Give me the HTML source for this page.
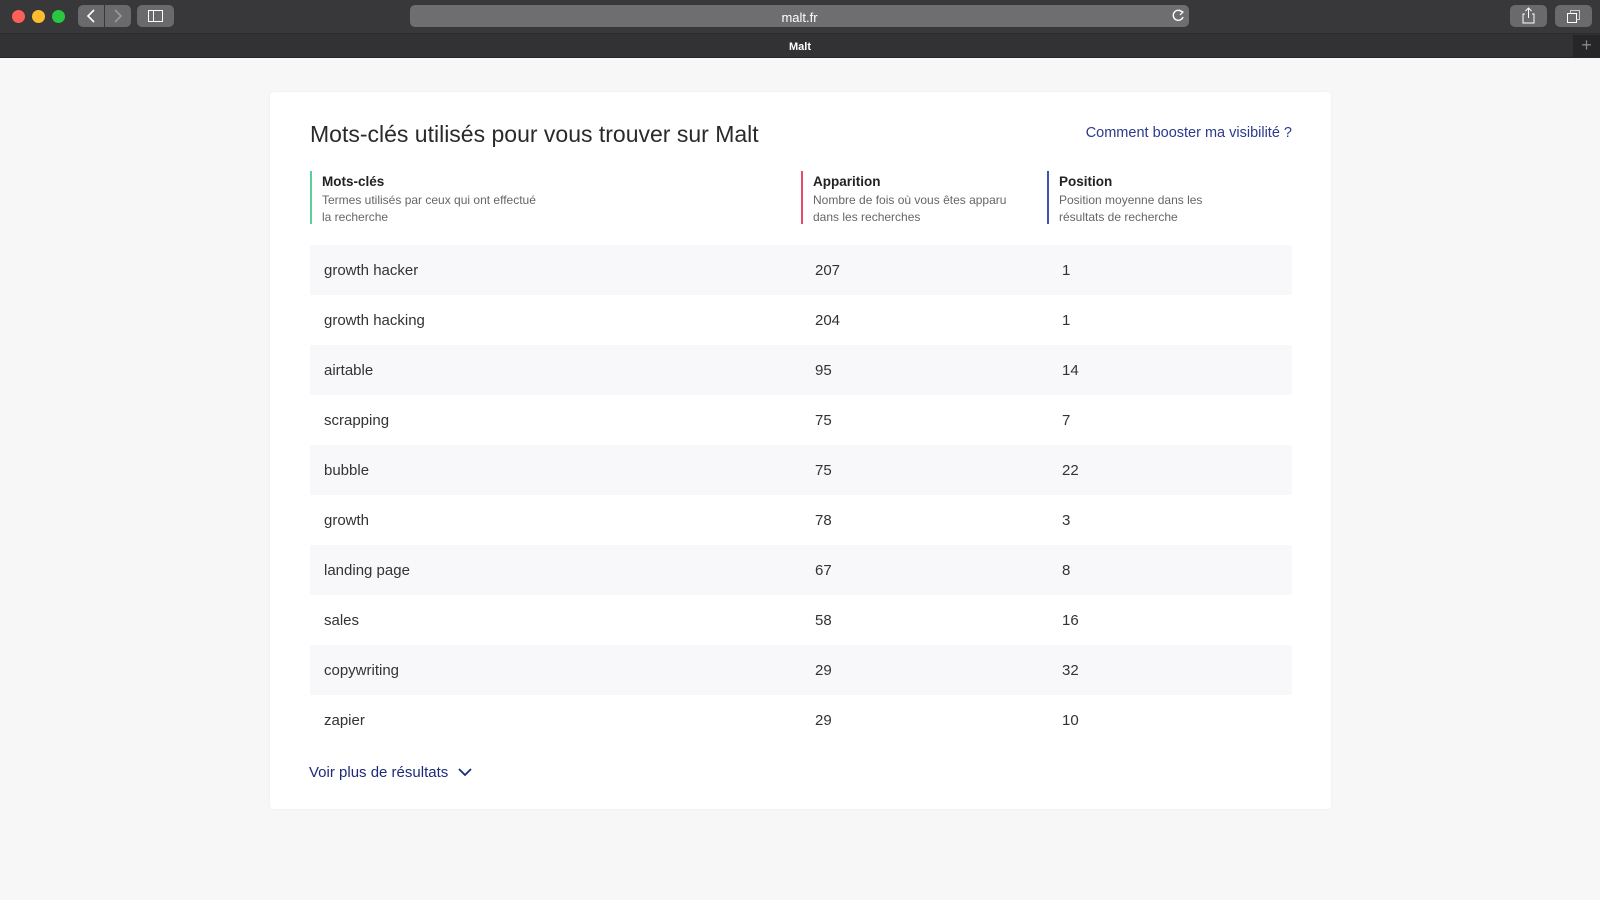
<!DOCTYPE html>
<html><head><meta charset="utf-8"><style>
*{margin:0;padding:0;box-sizing:border-box}
body{width:1600px;height:900px;overflow:hidden;background:#f7f7f7;font-family:"Liberation Sans",sans-serif;position:relative}
.abs{position:absolute}
.top{left:0;top:0;width:1600px;height:34px;background:#38383a;border-bottom:1px solid #2a2a2c}
.tab{left:0;top:34px;width:1600px;height:24px;background:#323234;border-bottom:1px solid #262628}
.dot{width:13px;height:13px;border-radius:50%;top:10px}
.btn{background:#6a6a6c;border-radius:5px;height:22px;top:5px}
.card{left:270px;top:92px;width:1061px;height:717px;background:#fff;border-radius:4px;box-shadow:0 0 2px rgba(0,0,0,.06)}
.h{font-size:13.5px;font-weight:bold;color:#222;margin-top:3px}
.s{font-size:12px;color:#666;line-height:17px;margin-top:3px}
.row{left:310px;width:982px;height:50px;font-size:15px;color:#333}
.row span{position:absolute;top:17px}
.alt{background:#f8f8fb}
</style></head><body>
<div class="abs top"></div>
<div class="abs dot" style="left:12px;background:#fe5f57"></div>
<div class="abs dot" style="left:32px;background:#febc2e"></div>
<div class="abs dot" style="left:52px;background:#28c840"></div>
<div class="abs btn" style="left:78px;width:26px;border-radius:5px 0 0 5px"></div>
<div class="abs btn" style="left:105px;width:26px;border-radius:0 5px 5px 0"></div>
<svg class="abs" style="left:78px;top:5px" width="53" height="22"><path d="M16 5 L10 11 L16 17" stroke="#fff" stroke-width="1.6" fill="none"/><path d="M37 5 L43 11 L37 17" stroke="#999" stroke-width="1.6" fill="none"/></svg>
<div class="abs btn" style="left:137px;width:37px"></div>
<svg class="abs" style="left:137px;top:5px" width="37" height="22"><rect x="11.5" y="5.5" width="14" height="11" stroke="#fff" fill="none"/><line x1="16.5" y1="5.5" x2="16.5" y2="16.5" stroke="#fff"/></svg>
<div class="abs" style="left:410px;top:5px;width:779px;height:22px;background:#6e6e70;border-radius:5px;color:#fff;font-size:13px;text-align:center;line-height:25px">malt.fr</div>
<svg class="abs" style="left:1170px;top:8px" width="16" height="16"><path d="M12 4 A5 5 0 1 0 13 9" stroke="#fff" stroke-width="1.4" fill="none"/><path d="M9 2 L13 4 L10 7" stroke="#fff" stroke-width="1.2" fill="none"/></svg>
<div class="abs btn" style="left:1510px;width:37px"></div>
<svg class="abs" style="left:1510px;top:5px" width="37" height="22"><path d="M15 9 H13 V18 H24 V9 H22" stroke="#fff" fill="none"/><path d="M18.5 13 V3 M15.5 6 L18.5 3 L21.5 6" stroke="#fff" fill="none"/></svg>
<div class="abs btn" style="left:1555px;width:37px"></div>
<svg class="abs" style="left:1555px;top:5px" width="37" height="22"><rect x="12.5" y="8.5" width="9" height="9" stroke="#fff" fill="none"/><path d="M15.5 8.5 V5.5 H24.5 V14.5 H21.5" stroke="#ccc" fill="none"/></svg>
<div class="abs tab"></div>
<div class="abs" style="left:0;top:35px;width:1600px;height:24px;color:#fff;font-size:11px;font-weight:bold;text-align:center;line-height:24px">Malt</div>
<div class="abs" style="left:1573px;top:35px;width:27px;height:22px;background:#262628;color:#888;font-size:18px;text-align:center;line-height:21px">+</div>

<div class="abs card"></div>
<div class="abs" style="left:310px;top:121px;font-size:23px;color:#2a2a2a">Mots-clés utilisés pour vous trouver sur Malt</div>
<div class="abs" style="right:308px;top:125px;font-size:14.5px;color:#2b3a8c">Comment booster ma visibilité ?</div>

<div class="abs" style="left:310px;top:171px;height:53px;border-left:2px solid #5ccf96;padding-left:10px"><div class="h">Mots-clés</div><div class="s">Termes utilisés par ceux qui ont effectué<br>la recherche</div></div>
<div class="abs" style="left:801px;top:171px;height:53px;border-left:2px solid #e8486a;padding-left:10px"><div class="h">Apparition</div><div class="s">Nombre de fois où vous êtes apparu<br>dans les recherches</div></div>
<div class="abs" style="left:1047px;top:171px;height:53px;border-left:2px solid #4350b0;padding-left:10px"><div class="h">Position</div><div class="s">Position moyenne dans les<br>résultats de recherche</div></div>

<div class="abs row alt" style="top:245px"><span style="left:14px">growth hacker</span><span style="left:505px">207</span><span style="left:752px">1</span></div>
<div class="abs row" style="top:295px"><span style="left:14px">growth hacking</span><span style="left:505px">204</span><span style="left:752px">1</span></div>
<div class="abs row alt" style="top:345px"><span style="left:14px">airtable</span><span style="left:505px">95</span><span style="left:752px">14</span></div>
<div class="abs row" style="top:395px"><span style="left:14px">scrapping</span><span style="left:505px">75</span><span style="left:752px">7</span></div>
<div class="abs row alt" style="top:445px"><span style="left:14px">bubble</span><span style="left:505px">75</span><span style="left:752px">22</span></div>
<div class="abs row" style="top:495px"><span style="left:14px">growth</span><span style="left:505px">78</span><span style="left:752px">3</span></div>
<div class="abs row alt" style="top:545px"><span style="left:14px">landing page</span><span style="left:505px">67</span><span style="left:752px">8</span></div>
<div class="abs row" style="top:595px"><span style="left:14px">sales</span><span style="left:505px">58</span><span style="left:752px">16</span></div>
<div class="abs row alt" style="top:645px"><span style="left:14px">copywriting</span><span style="left:505px">29</span><span style="left:752px">32</span></div>
<div class="abs row" style="top:695px"><span style="left:14px">zapier</span><span style="left:505px">29</span><span style="left:752px">10</span></div>

<div class="abs" style="left:309px;top:764px;font-size:15px;color:#1e2a78">Voir plus de résultats</div>
<svg class="abs" style="left:457px;top:766px" width="16" height="12"><path d="M2 3 L8 9 L14 3" stroke="#1e2a78" stroke-width="1.8" fill="none"/></svg>
</body></html>
